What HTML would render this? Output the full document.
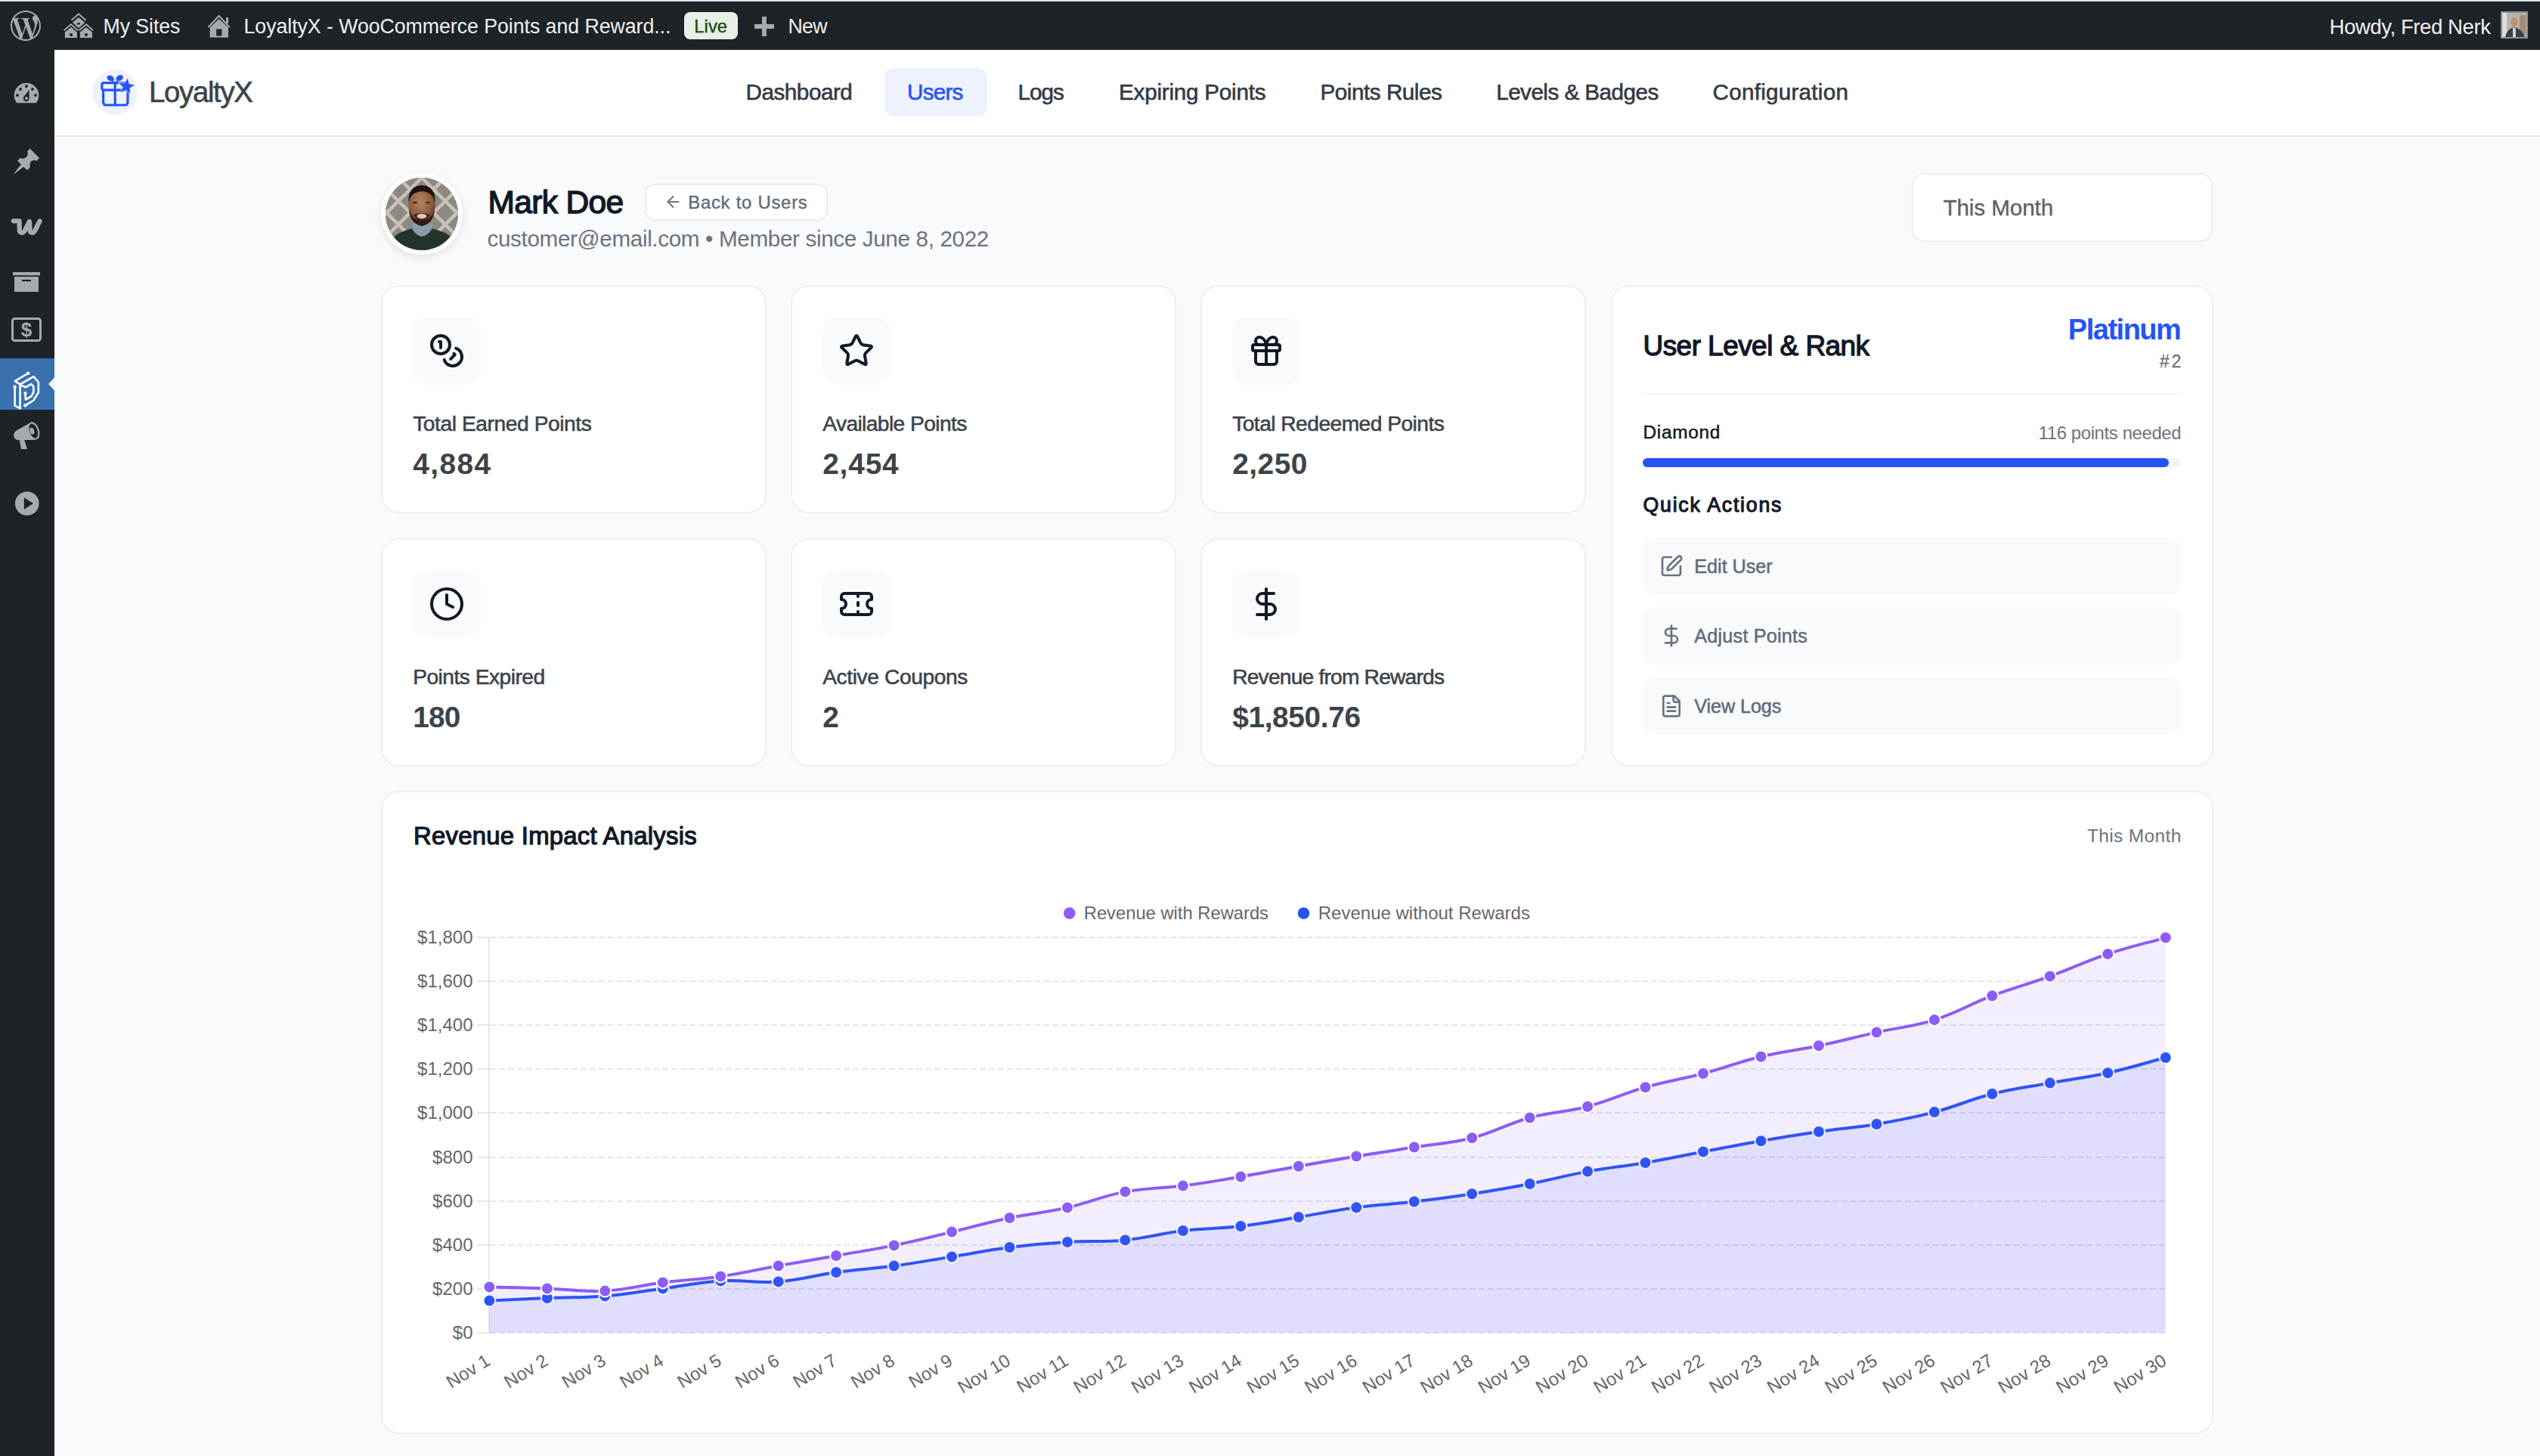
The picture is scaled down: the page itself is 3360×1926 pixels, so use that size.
<!DOCTYPE html>
<html><head><meta charset="utf-8"><title>LoyaltyX - User</title>
<style>
html,body{margin:0;padding:0;}
body{width:3360px;height:1926px;overflow:hidden;background:#f9fafb;font-family:"Liberation Sans",sans-serif;}
#root{position:relative;width:3360px;height:1926px;overflow:hidden;}
.t{position:absolute;white-space:nowrap;line-height:1;}
.a{position:absolute;}
svg{position:absolute;overflow:visible;}
@media (max-width: 2400px) {
  body{width:1680px;height:963px;}
  #root{zoom:0.5;}
}

</style></head><body>
<div id="root">
<div class="a" style="left:0;top:0;width:3360px;height:2px;background:#e4e4e4"></div>
<div class="a" style="left:0;top:2px;width:3360px;height:64px;background:#1d2327"></div>
<div class="a" style="left:0;top:66px;width:72px;height:1860px;background:#1d2327"></div>
<div class="a" style="left:72px;top:66px;width:3288px;height:113px;background:#fff;border-bottom:2px solid #e5e7eb"></div>
<div class="t" style="font-size:26.74px;top:22.35px;color:#f0f0f1;letter-spacing:-0.078px;left:136.50px;">My Sites</div>
<div class="t" style="font-size:26.74px;top:22.35px;color:#f0f0f1;letter-spacing:-0.053px;left:322.50px;">LoyaltyX - WooCommerce Points and Reward...</div>
<div class="a" style="left:905px;top:16px;width:71px;height:36px;background:#e7f0e7;border-radius:8px"></div>
<div class="t" style="font-size:23.84px;top:22.61px;color:#1a4a12;letter-spacing:0.018px;-webkit-text-stroke:0.4px #1a4a12;left:918.30px;">Live</div>
<div class="t" style="font-size:26.74px;top:22.35px;color:#f0f0f1;letter-spacing:-0.773px;left:1042.50px;">New</div>
<div class="t" style="font-size:27.47px;top:21.73px;color:#f0f0f1;letter-spacing:-0.39px;left:3081.50px;">Howdy, Fred Nerk</div>
<div class="a" style="left:122px;top:92px;width:60px;height:60px;border-radius:50%;background:#eef2fe"></div>
<div class="t" style="font-size:38.37px;top:102.90px;color:#3c434a;letter-spacing:-1.336px;-webkit-text-stroke:0.6px #3c434a;left:197.10px;">LoyaltyX</div>
<div class="a" style="left:1170px;top:90px;width:136px;height:64px;border-radius:12px;background:#eef2fd"></div>
<div class="t" style="font-size:29.65px;top:106.89px;color:#333a45;letter-spacing:-0.458px;-webkit-text-stroke:0.6px #333a45;left:986.50px;">Dashboard</div>
<div class="t" style="font-size:29.65px;top:106.89px;color:#2554f5;letter-spacing:-0.765px;-webkit-text-stroke:0.6px #2554f5;left:1200.00px;">Users</div>
<div class="t" style="font-size:29.65px;top:106.89px;color:#333a45;letter-spacing:-0.955px;-webkit-text-stroke:0.6px #333a45;left:1346.50px;">Logs</div>
<div class="t" style="font-size:29.65px;top:106.89px;color:#333a45;letter-spacing:-0.226px;-webkit-text-stroke:0.6px #333a45;left:1480.00px;">Expiring Points</div>
<div class="t" style="font-size:29.65px;top:106.89px;color:#333a45;letter-spacing:-0.462px;-webkit-text-stroke:0.6px #333a45;left:1746.50px;">Points Rules</div>
<div class="t" style="font-size:29.65px;top:106.89px;color:#333a45;letter-spacing:-0.53px;-webkit-text-stroke:0.6px #333a45;left:1979.20px;">Levels &amp; Badges</div>
<div class="t" style="font-size:29.65px;top:106.89px;color:#333a45;letter-spacing:0.255px;-webkit-text-stroke:0.6px #333a45;left:2265.50px;">Configuration</div>
<div class="a" style="left:504px;top:229px;width:108px;height:108px;border-radius:50%;background:#fff;box-shadow:0 4px 12px rgba(0,0,0,0.10)"></div>
<div class="a" style="left:510px;top:235px;width:96px;height:96px;border-radius:50%;background:#8f8a84"></div>
<div class="t" style="font-size:42.5px;top:247.00px;color:#111827;letter-spacing:-0.663px;-webkit-text-stroke:1.4px #111827;left:645.50px;">Mark Doe</div>
<div class="a" style="left:852.5px;top:242.5px;width:238.5px;height:45.5px;border:2px solid #ececec;border-radius:13px;background:#fff"></div>
<div class="t" style="font-size:23.84px;top:255.56px;color:#5f6b7a;letter-spacing:0.766px;-webkit-text-stroke:0.4px #5f6b7a;left:910.25px;">Back to Users</div>
<div class="t" style="font-size:29.65px;top:300.64px;color:#6b7280;letter-spacing:-0.353px;left:644.50px;">customer@email.com • Member since June 8, 2022</div>
<div class="a" style="left:2529px;top:229px;width:394px;height:87px;border:2px solid #eeeeee;border-radius:16px;background:#fff"></div>
<div class="t" style="font-size:29.65px;top:260.09px;color:#5c6068;letter-spacing:-0.11px;-webkit-text-stroke:0.3px #5c6068;left:2570.50px;">This Month</div>
<div class="a" style="left:504px;top:377px;width:506px;height:298px;border:2px solid #efefef;border-radius:24px;background:#fff"></div>
<div class="a" style="left:546px;top:419px;width:90px;height:90px;border-radius:20px;background:#f9fafb"></div>
<div class="t" style="font-size:28.2px;top:545.81px;color:#3c434a;letter-spacing:-0.434px;-webkit-text-stroke:0.55px #3c434a;left:546.20px;">Total Earned Points</div>
<div class="t" style="font-size:38.81px;top:595.13px;color:#3c434a;font-weight:700;letter-spacing:1.469px;left:546.20px;">4,884</div>
<div class="a" style="left:1046px;top:377px;width:506px;height:298px;border:2px solid #efefef;border-radius:24px;background:#fff"></div>
<div class="a" style="left:1088px;top:419px;width:90px;height:90px;border-radius:20px;background:#f9fafb"></div>
<div class="t" style="font-size:28.2px;top:545.81px;color:#3c434a;letter-spacing:-0.597px;-webkit-text-stroke:0.55px #3c434a;left:1088.20px;">Available Points</div>
<div class="t" style="font-size:38.81px;top:595.13px;color:#3c434a;font-weight:700;letter-spacing:0.844px;left:1088.20px;">2,454</div>
<div class="a" style="left:1588px;top:377px;width:506px;height:298px;border:2px solid #efefef;border-radius:24px;background:#fff"></div>
<div class="a" style="left:1630px;top:419px;width:90px;height:90px;border-radius:20px;background:#f9fafb"></div>
<div class="t" style="font-size:28.2px;top:545.81px;color:#3c434a;letter-spacing:-0.542px;-webkit-text-stroke:0.55px #3c434a;left:1630.20px;">Total Redeemed Points</div>
<div class="t" style="font-size:38.81px;top:595.13px;color:#3c434a;font-weight:700;letter-spacing:0.519px;left:1630.20px;">2,250</div>
<div class="a" style="left:504px;top:712px;width:506px;height:298px;border:2px solid #efefef;border-radius:24px;background:#fff"></div>
<div class="a" style="left:546px;top:754px;width:90px;height:90px;border-radius:20px;background:#f9fafb"></div>
<div class="t" style="font-size:28.2px;top:880.81px;color:#3c434a;letter-spacing:-0.528px;-webkit-text-stroke:0.55px #3c434a;left:546.20px;">Points Expired</div>
<div class="t" style="font-size:38.81px;top:930.13px;color:#3c434a;font-weight:700;letter-spacing:-0.858px;left:546.20px;">180</div>
<div class="a" style="left:1046px;top:712px;width:506px;height:298px;border:2px solid #efefef;border-radius:24px;background:#fff"></div>
<div class="a" style="left:1088px;top:754px;width:90px;height:90px;border-radius:20px;background:#f9fafb"></div>
<div class="t" style="font-size:28.2px;top:880.81px;color:#3c434a;letter-spacing:-0.407px;-webkit-text-stroke:0.55px #3c434a;left:1088.20px;">Active Coupons</div>
<div class="t" style="font-size:38.81px;top:930.13px;color:#3c434a;font-weight:700;left:1088.20px;">2</div>
<div class="a" style="left:1588px;top:712px;width:506px;height:298px;border:2px solid #efefef;border-radius:24px;background:#fff"></div>
<div class="a" style="left:1630px;top:754px;width:90px;height:90px;border-radius:20px;background:#f9fafb"></div>
<div class="t" style="font-size:28.2px;top:880.81px;color:#3c434a;letter-spacing:-0.805px;-webkit-text-stroke:0.55px #3c434a;left:1630.20px;">Revenue from Rewards</div>
<div class="t" style="font-size:38.81px;top:930.13px;color:#3c434a;font-weight:700;letter-spacing:-0.338px;left:1630.20px;">$1,850.76</div>
<div class="a" style="left:2131px;top:377px;width:793px;height:633px;border:2px solid #efefef;border-radius:24px;background:#fff"></div>
<div class="t" style="font-size:37px;top:439.36px;color:#111827;letter-spacing:-0.555px;-webkit-text-stroke:1.3px #111827;left:2173.50px;">User Level &amp; Rank</div>
<div class="t" style="font-size:37.94px;top:418.06px;color:#2554f5;font-weight:700;letter-spacing:-1.457px;right:475.66px;">Platinum</div>
<div class="t" style="font-size:23.26px;top:467.30px;color:#6b7280;letter-spacing:2.823px;-webkit-text-stroke:0.3px #6b7280;right:471.68px;">#2</div>
<div class="a" style="left:2173px;top:520px;width:713px;height:2px;background:#f3f4f6"></div>
<div class="t" style="font-size:24.42px;top:560.32px;color:#111827;letter-spacing:0.71px;-webkit-text-stroke:0.5px #111827;left:2173.50px;">Diamond</div>
<div class="t" style="font-size:23.84px;top:560.81px;color:#6b7280;letter-spacing:-0.338px;right:474.84px;">116 points needed</div>
<div class="a" style="left:2173px;top:606px;width:713px;height:12px;border-radius:6px;background:#f3f4f6"></div>
<div class="a" style="left:2173px;top:606px;width:696px;height:12px;border-radius:6px;background:#2554f5"></div>
<div class="t" style="font-size:26.74px;top:654.95px;color:#111827;letter-spacing:1.744px;-webkit-text-stroke:1.1px #111827;left:2173.50px;">Quick Actions</div>
<div class="a" style="left:2173px;top:711px;width:713px;height:76px;border-radius:16px;background:#f9fafb"></div>
<div class="t" style="font-size:25.29px;top:736.88px;color:#5f6b7a;letter-spacing:-0.063px;-webkit-text-stroke:0.5px #5f6b7a;left:2241.30px;">Edit User</div>
<div class="a" style="left:2173px;top:803px;width:713px;height:76px;border-radius:16px;background:#f9fafb"></div>
<div class="t" style="font-size:25.29px;top:828.88px;color:#5f6b7a;letter-spacing:0.172px;-webkit-text-stroke:0.5px #5f6b7a;left:2241.30px;">Adjust Points</div>
<div class="a" style="left:2173px;top:896px;width:713px;height:76px;border-radius:16px;background:#f9fafb"></div>
<div class="t" style="font-size:25.29px;top:921.88px;color:#5f6b7a;letter-spacing:-0.138px;-webkit-text-stroke:0.5px #5f6b7a;left:2241.30px;">View Logs</div>
<div class="a" style="left:504px;top:1046px;width:2420px;height:847px;border:2px solid #efefef;border-radius:24px;background:#fff"></div>
<div class="t" style="font-size:32.92px;top:1090.37px;color:#111827;letter-spacing:0.236px;-webkit-text-stroke:1.2px #111827;left:547.00px;">Revenue Impact Analysis</div>
<div class="t" style="font-size:24.42px;top:1094.12px;color:#6b7280;letter-spacing:0.398px;right:474.40px;">This Month</div>
<svg width="3360" height="1926" viewBox="0 0 3360 1926" style="left:0;top:0"><g transform="translate(14 14) scale(1.66667)"><path fill="#a7aaad" d="M21.469 6.825c.84 1.537 1.318 3.3 1.318 5.175 0 3.979-2.156 7.456-5.363 9.325l3.295-9.527c.615-1.54.82-2.771.82-3.864 0-.405-.026-.78-.07-1.11m-7.981.105c.647-.03 1.232-.105 1.232-.105.582-.075.514-.93-.067-.899 0 0-1.755.135-2.88.135-1.064 0-2.85-.15-2.85-.15-.585-.03-.661.855-.075.885 0 0 .54.061 1.125.09l1.68 4.605-2.37 7.08L5.354 6.9c.649-.03 1.234-.1 1.234-.1.585-.075.516-.93-.065-.896 0 0-1.746.138-2.874.138-.2 0-.438-.008-.69-.015C4.911 3.15 8.235 1.215 12 1.215c2.809 0 5.365 1.072 7.286 2.833-.046-.003-.091-.009-.141-.009-1.06 0-1.812.923-1.812 1.914 0 .89.513 1.643 1.06 2.531.411.72.89 1.643.89 2.977 0 .915-.354 1.994-.821 3.479l-1.075 3.585-3.9-11.61.001.014zM12 22.784c-1.059 0-2.081-.153-3.048-.437l3.237-9.406 3.315 9.087c.024.053.05.101.078.149-1.12.393-2.325.609-3.582.609M1.211 12c0-1.564.336-3.05.935-4.39L7.29 21.709C3.694 19.96 1.212 16.271 1.211 12M12 0C5.385 0 0 5.385 0 12s5.385 12 12 12 12-5.385 12-12S18.615 0 12 0"/></g><polyline points="94.5,26.5 104,18.6 113.6,26.8" fill="none" stroke="#a7aaad" stroke-width="1.9"/><polygon points="95.8,29.8 104,22.9 112.3,29.8 104,37.2" fill="#a7aaad"/><rect x="102.2" y="30.1" width="3.5" height="2.6" fill="#1d2327"/><polyline points="84.6,40.3 94,32.3 103.2,40.3" fill="none" stroke="#a7aaad" stroke-width="1.9"/><polygon points="85.9,42.6 94,36 102,42.6 102,50 85.9,50" fill="#a7aaad"/><rect x="92.2" y="44.1" width="3.6" height="3.7" fill="#1d2327"/><polyline points="104.55,40.3 113.95,32.3 123.15,40.3" fill="none" stroke="#a7aaad" stroke-width="1.9"/><polygon points="105.85000000000001,42.6 113.95,36 121.95,42.6 121.95,50 105.85000000000001,50" fill="#a7aaad"/><rect x="112.15" y="44.1" width="3.6" height="3.7" fill="#1d2327"/><polyline points="275.5,36 289.6,21 303.6,36" fill="none" stroke="#a7aaad" stroke-width="2.2"/><rect x="299" y="23" width="3" height="8" fill="#a7aaad"/><polygon points="277.6,36.5 289.6,25 302,36.5 302,49.6 277.6,49.6" fill="#a7aaad"/><rect x="286.2" y="38.5" width="7.2" height="9" fill="#1d2327"/><rect x="998" y="32" width="26" height="6" fill="#a7aaad"/><rect x="1008" y="22" width="6" height="26" fill="#a7aaad"/><rect x="3308" y="15" width="36" height="36" fill="#8a8f96"/><rect x="3310" y="17" width="32" height="32" fill="#b9b4ab"/><rect x="3310" y="17" width="6" height="32" fill="#d9dde0"/><rect x="3333" y="20" width="8" height="26" fill="#a48a6e"/><path d="M3314 49 Q3316 38 3326 36 Q3336 38 3340 49 Z" fill="#3a3f4a"/><rect x="3324" y="37" width="4" height="12" fill="#d8d2c0"/><ellipse cx="3326" cy="29" rx="4.5" ry="6" fill="#b98f74"/><path d="M22.3 136.3 A16.3 16.3 0 1 1 47.7 136.3 Z" fill="#a7aaad"/><circle cx="34.9" cy="114" r="1.9" fill="#1d2327"/><circle cx="27" cy="118" r="1.9" fill="#1d2327"/><circle cx="43" cy="118" r="1.9" fill="#1d2327"/><circle cx="23" cy="125.9" r="1.9" fill="#1d2327"/><circle cx="47" cy="125.9" r="1.9" fill="#1d2327"/><path d="M38.6 118.7 L38.6 130.5 A3.9 3.9 0 1 1 31.4 128.2 Z" fill="#1d2327"/><circle cx="34.9" cy="130.1" r="2" fill="#a7aaad"/><path d="M39.5 196.4 L52.1 209.1 L48.5 212.7 Q41.5 210.5 39.6 216.5 Q38.8 219.5 39.9 221.6 L36.1 225 L31 220.7 Q23.5 226.5 18.1 230.9 Q21.5 224.5 27.9 217.5 L23.2 212.5 L26.8 209.1 Q30.5 211 34.5 208 Q38.3 204.5 36.1 200.3 Z" fill="#a7aaad"/><path transform="translate(1.8 0)" d="M16 292.3 L23.8 292.3 L24 305 Q24.3 307.8 27.3 307.8 Q29.5 307.8 31 305 L37.2 293 L37.7 305 Q38 307.8 41 307.8 Q43 307.8 44.5 305 L50.8 292.5" fill="none" stroke="#a7aaad" stroke-width="6.2" stroke-linecap="round" stroke-linejoin="round"/><rect x="17" y="360" width="36" height="4.2" fill="#a7aaad"/><rect x="19" y="366" width="32" height="20" fill="#a7aaad"/><rect x="29" y="370" width="12" height="2.2" fill="#1d2327"/><rect x="16.5" y="421.5" width="37" height="29" rx="3" fill="none" stroke="#a7aaad" stroke-width="3"/><text x="35" y="445" text-anchor="middle" font-family="Liberation Sans" font-weight="700" font-size="26" fill="#a7aaad">$</text><rect x="0" y="474" width="72" height="68" fill="#3871ae"/><polygon points="72,499.5 64,508 72,516.5" fill="#f0f0f1"/><g fill="none" stroke="#ffffff" stroke-width="2.6" stroke-linecap="round" stroke-linejoin="round"><polyline points="37.3,493.7 19.8,504.2 26.6,508.4 44.4,498.2 50.9,505.5 50.9,519 44.4,529.5 33.4,536.3"/><polyline points="19.6,511.8 19.6,536.3 26.6,540.5 26.6,508.4"/><polyline points="29.2,510.2 33.9,512.3 41.2,508.1 44.4,511.2 44.4,519 41.2,524.3 33.9,528.5 33.4,520.1"/></g><circle cx="37.3" cy="493.7" r="2.2" fill="#ffffff"/><circle cx="19.6" cy="511.8" r="2.2" fill="#ffffff"/><circle cx="33.4" cy="520.1" r="2.2" fill="#ffffff"/><circle cx="33.4" cy="536.3" r="2.2" fill="#ffffff"/><path d="M41.9 558.2 L22.5 569 Q17.6 571.8 18.2 577 Q19.2 582 24.5 582 L46 582 Z" fill="#a7aaad"/><ellipse cx="44.7" cy="569.9" rx="7.2" ry="12" transform="rotate(-18 44.7 569.9)" fill="#a7aaad"/><ellipse cx="44.3" cy="570" rx="5.3" ry="9.9" transform="rotate(-18 44.3 570)" fill="#1d2327"/><ellipse cx="42.3" cy="570.3" rx="2.9" ry="4.6" transform="rotate(-15 42.3 570.3)" fill="#a7aaad"/><polygon points="25.8,581.5 32,581.5 36.1,594 27.9,594" fill="#a7aaad"/><circle cx="35.8" cy="666" r="15.8" fill="#a7aaad"/><polygon points="31.8,658 31.8,674 44,666" fill="#1d2327"/><g fill="none" stroke="#2554f5" stroke-width="3.2" stroke-linejoin="round"><rect x="134.8" y="109.6" width="35" height="9.5" rx="2.5"/><path d="M136.6 119.5 V135 Q136.6 139 140.6 139 H165 Q169 139 169 135 V119.5"/><line x1="152.2" y1="109" x2="152.2" y2="139"/></g><ellipse cx="146.2" cy="103.6" rx="5" ry="3.6" fill="#2554f5" transform="rotate(28 146.2 103.6)"/><ellipse cx="158.2" cy="103.2" rx="5" ry="3.6" fill="#2554f5" transform="rotate(-28 158.2 103.2)"/><polygon points="148,105 152.2,108.5 156.5,105 155,110 149.5,110" fill="#2554f5"/><polygon points="168.97,102.52 170.84,110.73 179.12,112.32 171.88,116.64 172.93,125.00 166.59,119.45 158.96,123.03 162.28,115.29 156.51,109.14 164.91,109.90" fill="#2554f5" stroke="#eef2fe" stroke-width="0.8"/><defs><clipPath id="av"><circle cx="558" cy="283" r="48"/></clipPath><radialGradient id="face" cx="0.45" cy="0.4" r="0.6"><stop offset="0" stop-color="#b88462"/><stop offset="0.7" stop-color="#8c5d40"/><stop offset="1" stop-color="#5e3b28"/></radialGradient></defs><g clip-path="url(#av)"><rect x="510" y="235" width="96" height="96" fill="#8d8882"/><line x1="372" y1="235" x2="468" y2="331" stroke="#c6c1b9" stroke-width="4.5"/><line x1="744" y1="235" x2="648" y2="331" stroke="#c6c1b9" stroke-width="4.5"/><line x1="403" y1="235" x2="499" y2="331" stroke="#c6c1b9" stroke-width="4.5"/><line x1="713" y1="235" x2="617" y2="331" stroke="#c6c1b9" stroke-width="4.5"/><line x1="434" y1="235" x2="530" y2="331" stroke="#c6c1b9" stroke-width="4.5"/><line x1="682" y1="235" x2="586" y2="331" stroke="#c6c1b9" stroke-width="4.5"/><line x1="465" y1="235" x2="561" y2="331" stroke="#c6c1b9" stroke-width="4.5"/><line x1="651" y1="235" x2="555" y2="331" stroke="#c6c1b9" stroke-width="4.5"/><line x1="496" y1="235" x2="592" y2="331" stroke="#c6c1b9" stroke-width="4.5"/><line x1="620" y1="235" x2="524" y2="331" stroke="#c6c1b9" stroke-width="4.5"/><line x1="527" y1="235" x2="623" y2="331" stroke="#c6c1b9" stroke-width="4.5"/><line x1="589" y1="235" x2="493" y2="331" stroke="#c6c1b9" stroke-width="4.5"/><line x1="558" y1="235" x2="654" y2="331" stroke="#c6c1b9" stroke-width="4.5"/><line x1="558" y1="235" x2="462" y2="331" stroke="#c6c1b9" stroke-width="4.5"/><line x1="589" y1="235" x2="685" y2="331" stroke="#c6c1b9" stroke-width="4.5"/><line x1="527" y1="235" x2="431" y2="331" stroke="#c6c1b9" stroke-width="4.5"/><line x1="620" y1="235" x2="716" y2="331" stroke="#c6c1b9" stroke-width="4.5"/><line x1="496" y1="235" x2="400" y2="331" stroke="#c6c1b9" stroke-width="4.5"/><line x1="651" y1="235" x2="747" y2="331" stroke="#c6c1b9" stroke-width="4.5"/><line x1="465" y1="235" x2="369" y2="331" stroke="#c6c1b9" stroke-width="4.5"/><path d="M512 331 L518 316 Q528 306 546 302 L570 302 Q590 306 600 316 L606 331 Z" fill="#22352b"/><path d="M544 298 Q547 311 558 313 Q569 311 573 298 L568 295 L549 295 Z" fill="#8d9aae"/><ellipse cx="558" cy="272" rx="17.5" ry="25" fill="url(#face)"/><path d="M540.5 268 Q539 246 558 245 Q577 246 575.5 268 Q573 254 558 253 Q543 254 540.5 268 Z" fill="#1e1410"/><path d="M541 276 Q542 296 558 299 Q574 296 575 276 Q572 291 558 292 Q544 291 541 276 Z" fill="#2a1c15"/><path d="M547 284 Q558 280 569 284 Q566 291 558 292 Q550 291 547 284 Z" fill="#3a2418"/><ellipse cx="558" cy="286" rx="6.5" ry="3.2" fill="#e2c6bb"/><rect x="546" y="267" width="6" height="2" rx="1" fill="#3a2518"/><rect x="563" y="267" width="6" height="2" rx="1" fill="#3a2518"/></g><g transform="translate(567 440) scale(2.0)" fill="none" stroke="#111827" stroke-width="2" stroke-linecap="round" stroke-linejoin="round"><circle cx="8" cy="8" r="6"/><path d="M18.09 10.37A6 6 0 1 1 10.34 18"/><path d="M7 6h1v4"/><path d="m16.71 13.88.7.71-2.82 2.82"/></g><g transform="translate(1109 440) scale(2.0)" fill="none" stroke="#111827" stroke-width="2" stroke-linecap="round" stroke-linejoin="round"><path d="M11.525 2.295a.53.53 0 0 1 .95 0l2.31 4.679a2.123 2.123 0 0 0 1.595 1.16l5.166.756a.53.53 0 0 1 .294.904l-3.736 3.638a2.123 2.123 0 0 0-.611 1.878l.882 5.14a.53.53 0 0 1-.771.56l-4.618-2.428a2.122 2.122 0 0 0-1.973 0L6.396 21.01a.53.53 0 0 1-.77-.56l.881-5.139a2.122 2.122 0 0 0-.611-1.879L2.16 9.795a.53.53 0 0 1 .294-.906l5.165-.755a2.122 2.122 0 0 0 1.597-1.16z"/></g><g transform="translate(1651 440) scale(2.0)" fill="none" stroke="#111827" stroke-width="2" stroke-linecap="round" stroke-linejoin="round"><rect x="3" y="8" width="18" height="4" rx="1"/><path d="M12 8v13"/><path d="M19 12v7a2 2 0 0 1-2 2H7a2 2 0 0 1-2-2v-7"/><path d="M7.5 8a2.5 2.5 0 0 1 0-5A4.8 8 0 0 1 12 8a4.8 8 0 0 1 4.5-5 2.5 2.5 0 0 1 0 5"/></g><g transform="translate(567 775) scale(2.0)" fill="none" stroke="#111827" stroke-width="2" stroke-linecap="round" stroke-linejoin="round"><circle cx="12" cy="12" r="10"/><polyline points="12 6 12 12 16 14"/></g><g transform="translate(1109 775) scale(2.0)" fill="none" stroke="#111827" stroke-width="2" stroke-linecap="round" stroke-linejoin="round"><path d="M2 9a3 3 0 0 1 0 6v2a2 2 0 0 0 2 2h16a2 2 0 0 0 2-2v-2a3 3 0 0 1 0-6V7a2 2 0 0 0-2-2H4a2 2 0 0 0-2 2Z"/><path d="M13 5v2"/><path d="M13 17v2"/><path d="M13 11v2"/></g><g transform="translate(1651 775) scale(2.0)" fill="none" stroke="#111827" stroke-width="2" stroke-linecap="round" stroke-linejoin="round"><line x1="12" x2="12" y1="2" y2="22"/><path d="M17 5H9.5a3.5 3.5 0 0 0 0 7h5a3.5 3.5 0 0 1 0 7H6"/></g><g transform="translate(2195 733) scale(1.3333333333333333)" fill="none" stroke="#6b7280" stroke-width="2" stroke-linecap="round" stroke-linejoin="round"><path d="M12 3H5a2 2 0 0 0-2 2v14a2 2 0 0 0 2 2h14a2 2 0 0 0 2-2v-7"/><path d="M18.375 2.625a1 1 0 0 1 3 3l-9.013 9.014a2 2 0 0 1-.853.505l-2.873.84a.5.5 0 0 1-.62-.62l.84-2.873a2 2 0 0 1 .506-.852z"/></g><g transform="translate(2195 825) scale(1.3333333333333333)" fill="none" stroke="#6b7280" stroke-width="2" stroke-linecap="round" stroke-linejoin="round"><line x1="12" x2="12" y1="2" y2="22"/><path d="M17 5H9.5a3.5 3.5 0 0 0 0 7h5a3.5 3.5 0 0 1 0 7H6"/></g><g transform="translate(2195 918) scale(1.3333333333333333)" fill="none" stroke="#6b7280" stroke-width="2" stroke-linecap="round" stroke-linejoin="round"><path d="M15 2H6a2 2 0 0 0-2 2v16a2 2 0 0 0 2 2h12a2 2 0 0 0 2-2V7Z"/><path d="M14 2v4a2 2 0 0 0 2 2h4"/><path d="M10 9H8"/><path d="M16 13H8"/><path d="M16 17H8"/></g><g transform="translate(878.5 255) scale(1.0)" fill="none" stroke="#6b7280" stroke-width="2" stroke-linecap="round" stroke-linejoin="round"><path d="m12 19-7-7 7-7"/><path d="M19 12H5"/></g><line x1="631" y1="1763.00" x2="647" y2="1763.00" stroke="#e6e6e6" stroke-width="2"/><line x1="648" y1="1763.00" x2="2864.7" y2="1763.00" stroke="#e6e6e6" stroke-width="2" stroke-dasharray="8 4"/><text x="625.5" y="1771.30" text-anchor="end" font-family="Liberation Sans" font-size="24" fill="#666666">$0</text><line x1="631" y1="1705.00" x2="647" y2="1705.00" stroke="#e6e6e6" stroke-width="2"/><line x1="648" y1="1705.00" x2="2864.7" y2="1705.00" stroke="#e6e6e6" stroke-width="2" stroke-dasharray="8 4"/><text x="625.5" y="1713.30" text-anchor="end" font-family="Liberation Sans" font-size="24" fill="#666666">$200</text><line x1="631" y1="1647.00" x2="647" y2="1647.00" stroke="#e6e6e6" stroke-width="2"/><line x1="648" y1="1647.00" x2="2864.7" y2="1647.00" stroke="#e6e6e6" stroke-width="2" stroke-dasharray="8 4"/><text x="625.5" y="1655.30" text-anchor="end" font-family="Liberation Sans" font-size="24" fill="#666666">$400</text><line x1="631" y1="1589.00" x2="647" y2="1589.00" stroke="#e6e6e6" stroke-width="2"/><line x1="648" y1="1589.00" x2="2864.7" y2="1589.00" stroke="#e6e6e6" stroke-width="2" stroke-dasharray="8 4"/><text x="625.5" y="1597.30" text-anchor="end" font-family="Liberation Sans" font-size="24" fill="#666666">$600</text><line x1="631" y1="1531.00" x2="647" y2="1531.00" stroke="#e6e6e6" stroke-width="2"/><line x1="648" y1="1531.00" x2="2864.7" y2="1531.00" stroke="#e6e6e6" stroke-width="2" stroke-dasharray="8 4"/><text x="625.5" y="1539.30" text-anchor="end" font-family="Liberation Sans" font-size="24" fill="#666666">$800</text><line x1="631" y1="1472.00" x2="647" y2="1472.00" stroke="#e6e6e6" stroke-width="2"/><line x1="648" y1="1472.00" x2="2864.7" y2="1472.00" stroke="#e6e6e6" stroke-width="2" stroke-dasharray="8 4"/><text x="625.5" y="1480.30" text-anchor="end" font-family="Liberation Sans" font-size="24" fill="#666666">$1,000</text><line x1="631" y1="1414.00" x2="647" y2="1414.00" stroke="#e6e6e6" stroke-width="2"/><line x1="648" y1="1414.00" x2="2864.7" y2="1414.00" stroke="#e6e6e6" stroke-width="2" stroke-dasharray="8 4"/><text x="625.5" y="1422.30" text-anchor="end" font-family="Liberation Sans" font-size="24" fill="#666666">$1,200</text><line x1="631" y1="1356.00" x2="647" y2="1356.00" stroke="#e6e6e6" stroke-width="2"/><line x1="648" y1="1356.00" x2="2864.7" y2="1356.00" stroke="#e6e6e6" stroke-width="2" stroke-dasharray="8 4"/><text x="625.5" y="1364.30" text-anchor="end" font-family="Liberation Sans" font-size="24" fill="#666666">$1,400</text><line x1="631" y1="1298.00" x2="647" y2="1298.00" stroke="#e6e6e6" stroke-width="2"/><line x1="648" y1="1298.00" x2="2864.7" y2="1298.00" stroke="#e6e6e6" stroke-width="2" stroke-dasharray="8 4"/><text x="625.5" y="1306.30" text-anchor="end" font-family="Liberation Sans" font-size="24" fill="#666666">$1,600</text><line x1="631" y1="1240.00" x2="647" y2="1240.00" stroke="#e6e6e6" stroke-width="2"/><line x1="648" y1="1240.00" x2="2864.7" y2="1240.00" stroke="#e6e6e6" stroke-width="2" stroke-dasharray="8 4"/><text x="625.5" y="1248.30" text-anchor="end" font-family="Liberation Sans" font-size="24" fill="#666666">$1,800</text><line x1="647" y1="1240.0" x2="647" y2="1763.0" stroke="#e6e6e6" stroke-width="2"/><path d="M647.40 1720.60 C677.98 1719.16 693.27 1718.24 723.86 1717.00 C754.43 1715.76 769.85 1716.91 800.32 1714.40 C831.02 1711.87 846.19 1708.40 876.78 1704.40 C907.36 1700.40 922.52 1696.21 953.23 1694.40 C983.69 1692.61 999.31 1697.67 1029.69 1695.40 C1060.47 1693.11 1075.46 1687.17 1106.15 1683.00 C1136.63 1678.85 1152.13 1678.71 1182.61 1674.60 C1213.29 1670.47 1228.49 1667.32 1259.07 1662.40 C1289.66 1657.48 1304.81 1653.90 1335.53 1650.00 C1365.98 1646.14 1381.35 1644.92 1411.99 1643.00 C1442.51 1641.08 1458.05 1643.38 1488.44 1640.40 C1519.22 1637.38 1534.17 1631.70 1564.90 1628.00 C1595.34 1624.34 1610.92 1625.58 1641.36 1622.00 C1672.08 1618.38 1687.26 1614.96 1717.82 1610.00 C1748.43 1605.04 1763.56 1601.32 1794.28 1597.20 C1824.73 1593.12 1840.21 1593.09 1870.74 1589.50 C1901.38 1585.89 1916.70 1583.89 1947.20 1579.20 C1977.87 1574.49 1993.19 1571.90 2023.66 1566.00 C2054.36 1560.06 2069.36 1555.23 2100.11 1549.60 C2130.53 1544.03 2146.09 1543.20 2176.57 1538.00 C2207.25 1532.76 2222.44 1529.26 2253.03 1523.50 C2283.61 1517.74 2298.84 1514.51 2329.49 1509.20 C2360.00 1503.91 2375.30 1501.45 2405.95 1497.00 C2436.47 1492.57 2452.02 1492.15 2482.41 1487.00 C2513.18 1481.79 2528.68 1479.00 2558.87 1471.10 C2589.85 1463.00 2604.28 1454.82 2635.32 1447.00 C2665.45 1439.42 2681.16 1438.17 2711.78 1432.60 C2742.33 1427.05 2757.94 1425.86 2788.24 1419.20 C2819.11 1412.42 2834.12 1407.08 2864.70 1399.00 L2864.70 1763.0 L647.40 1763.0 Z" fill="rgba(37,84,245,0.1)" stroke="none"/><path d="M647.40 1720.60 C677.98 1719.16 693.27 1718.24 723.86 1717.00 C754.43 1715.76 769.85 1716.91 800.32 1714.40 C831.02 1711.87 846.19 1708.40 876.78 1704.40 C907.36 1700.40 922.52 1696.21 953.23 1694.40 C983.69 1692.61 999.31 1697.67 1029.69 1695.40 C1060.47 1693.11 1075.46 1687.17 1106.15 1683.00 C1136.63 1678.85 1152.13 1678.71 1182.61 1674.60 C1213.29 1670.47 1228.49 1667.32 1259.07 1662.40 C1289.66 1657.48 1304.81 1653.90 1335.53 1650.00 C1365.98 1646.14 1381.35 1644.92 1411.99 1643.00 C1442.51 1641.08 1458.05 1643.38 1488.44 1640.40 C1519.22 1637.38 1534.17 1631.70 1564.90 1628.00 C1595.34 1624.34 1610.92 1625.58 1641.36 1622.00 C1672.08 1618.38 1687.26 1614.96 1717.82 1610.00 C1748.43 1605.04 1763.56 1601.32 1794.28 1597.20 C1824.73 1593.12 1840.21 1593.09 1870.74 1589.50 C1901.38 1585.89 1916.70 1583.89 1947.20 1579.20 C1977.87 1574.49 1993.19 1571.90 2023.66 1566.00 C2054.36 1560.06 2069.36 1555.23 2100.11 1549.60 C2130.53 1544.03 2146.09 1543.20 2176.57 1538.00 C2207.25 1532.76 2222.44 1529.26 2253.03 1523.50 C2283.61 1517.74 2298.84 1514.51 2329.49 1509.20 C2360.00 1503.91 2375.30 1501.45 2405.95 1497.00 C2436.47 1492.57 2452.02 1492.15 2482.41 1487.00 C2513.18 1481.79 2528.68 1479.00 2558.87 1471.10 C2589.85 1463.00 2604.28 1454.82 2635.32 1447.00 C2665.45 1439.42 2681.16 1438.17 2711.78 1432.60 C2742.33 1427.05 2757.94 1425.86 2788.24 1419.20 C2819.11 1412.42 2834.12 1407.08 2864.70 1399.00" fill="none" stroke="#2554f5" stroke-width="4" stroke-linejoin="round"/><circle cx="647.40" cy="1720.60" r="8" fill="#2554f5" stroke="#fff" stroke-width="2"/><circle cx="723.86" cy="1717.00" r="8" fill="#2554f5" stroke="#fff" stroke-width="2"/><circle cx="800.32" cy="1714.40" r="8" fill="#2554f5" stroke="#fff" stroke-width="2"/><circle cx="876.78" cy="1704.40" r="8" fill="#2554f5" stroke="#fff" stroke-width="2"/><circle cx="953.23" cy="1694.40" r="8" fill="#2554f5" stroke="#fff" stroke-width="2"/><circle cx="1029.69" cy="1695.40" r="8" fill="#2554f5" stroke="#fff" stroke-width="2"/><circle cx="1106.15" cy="1683.00" r="8" fill="#2554f5" stroke="#fff" stroke-width="2"/><circle cx="1182.61" cy="1674.60" r="8" fill="#2554f5" stroke="#fff" stroke-width="2"/><circle cx="1259.07" cy="1662.40" r="8" fill="#2554f5" stroke="#fff" stroke-width="2"/><circle cx="1335.53" cy="1650.00" r="8" fill="#2554f5" stroke="#fff" stroke-width="2"/><circle cx="1411.99" cy="1643.00" r="8" fill="#2554f5" stroke="#fff" stroke-width="2"/><circle cx="1488.44" cy="1640.40" r="8" fill="#2554f5" stroke="#fff" stroke-width="2"/><circle cx="1564.90" cy="1628.00" r="8" fill="#2554f5" stroke="#fff" stroke-width="2"/><circle cx="1641.36" cy="1622.00" r="8" fill="#2554f5" stroke="#fff" stroke-width="2"/><circle cx="1717.82" cy="1610.00" r="8" fill="#2554f5" stroke="#fff" stroke-width="2"/><circle cx="1794.28" cy="1597.20" r="8" fill="#2554f5" stroke="#fff" stroke-width="2"/><circle cx="1870.74" cy="1589.50" r="8" fill="#2554f5" stroke="#fff" stroke-width="2"/><circle cx="1947.20" cy="1579.20" r="8" fill="#2554f5" stroke="#fff" stroke-width="2"/><circle cx="2023.66" cy="1566.00" r="8" fill="#2554f5" stroke="#fff" stroke-width="2"/><circle cx="2100.11" cy="1549.60" r="8" fill="#2554f5" stroke="#fff" stroke-width="2"/><circle cx="2176.57" cy="1538.00" r="8" fill="#2554f5" stroke="#fff" stroke-width="2"/><circle cx="2253.03" cy="1523.50" r="8" fill="#2554f5" stroke="#fff" stroke-width="2"/><circle cx="2329.49" cy="1509.20" r="8" fill="#2554f5" stroke="#fff" stroke-width="2"/><circle cx="2405.95" cy="1497.00" r="8" fill="#2554f5" stroke="#fff" stroke-width="2"/><circle cx="2482.41" cy="1487.00" r="8" fill="#2554f5" stroke="#fff" stroke-width="2"/><circle cx="2558.87" cy="1471.10" r="8" fill="#2554f5" stroke="#fff" stroke-width="2"/><circle cx="2635.32" cy="1447.00" r="8" fill="#2554f5" stroke="#fff" stroke-width="2"/><circle cx="2711.78" cy="1432.60" r="8" fill="#2554f5" stroke="#fff" stroke-width="2"/><circle cx="2788.24" cy="1419.20" r="8" fill="#2554f5" stroke="#fff" stroke-width="2"/><circle cx="2864.70" cy="1399.00" r="8" fill="#2554f5" stroke="#fff" stroke-width="2"/><path d="M647.40 1702.40 C677.98 1703.20 693.28 1703.36 723.86 1704.40 C754.45 1705.44 769.88 1709.19 800.32 1707.60 C831.05 1705.99 846.11 1700.25 876.78 1696.40 C907.28 1692.57 922.82 1692.78 953.23 1688.40 C983.99 1683.98 999.09 1679.88 1029.69 1674.40 C1060.26 1668.92 1075.58 1666.40 1106.15 1661.00 C1136.74 1655.60 1152.19 1653.65 1182.61 1647.40 C1213.36 1641.09 1228.52 1636.87 1259.07 1629.60 C1289.69 1622.31 1304.74 1617.48 1335.53 1611.00 C1365.91 1604.60 1381.72 1604.25 1411.99 1597.40 C1442.89 1590.41 1457.38 1582.25 1488.44 1576.40 C1518.55 1570.73 1534.43 1572.57 1564.90 1568.60 C1595.60 1564.61 1610.83 1561.67 1641.36 1556.50 C1672.00 1551.31 1687.22 1548.10 1717.82 1542.70 C1748.38 1537.30 1763.65 1534.53 1794.28 1529.50 C1824.82 1524.49 1840.17 1522.44 1870.74 1517.60 C1901.33 1512.76 1917.30 1512.94 1947.20 1505.30 C1978.47 1497.30 1992.47 1486.98 2023.66 1478.50 C2053.63 1470.34 2070.06 1471.62 2100.11 1463.70 C2131.22 1455.50 2145.60 1447.05 2176.57 1438.20 C2206.77 1429.57 2222.65 1428.03 2253.03 1420.00 C2283.81 1411.87 2298.56 1405.22 2329.49 1397.80 C2359.72 1390.54 2375.49 1389.71 2405.95 1383.30 C2436.66 1376.83 2451.77 1372.45 2482.41 1365.60 C2512.94 1358.77 2529.16 1358.50 2558.87 1349.10 C2590.33 1339.14 2604.34 1328.89 2635.32 1317.20 C2665.51 1305.81 2681.44 1302.37 2711.78 1291.40 C2742.60 1280.25 2757.18 1272.28 2788.24 1261.90 C2818.35 1251.84 2834.12 1248.94 2864.70 1240.30 L2864.70 1763.0 L647.40 1763.0 Z" fill="rgba(139,92,246,0.1)" stroke="none"/><path d="M647.40 1702.40 C677.98 1703.20 693.28 1703.36 723.86 1704.40 C754.45 1705.44 769.88 1709.19 800.32 1707.60 C831.05 1705.99 846.11 1700.25 876.78 1696.40 C907.28 1692.57 922.82 1692.78 953.23 1688.40 C983.99 1683.98 999.09 1679.88 1029.69 1674.40 C1060.26 1668.92 1075.58 1666.40 1106.15 1661.00 C1136.74 1655.60 1152.19 1653.65 1182.61 1647.40 C1213.36 1641.09 1228.52 1636.87 1259.07 1629.60 C1289.69 1622.31 1304.74 1617.48 1335.53 1611.00 C1365.91 1604.60 1381.72 1604.25 1411.99 1597.40 C1442.89 1590.41 1457.38 1582.25 1488.44 1576.40 C1518.55 1570.73 1534.43 1572.57 1564.90 1568.60 C1595.60 1564.61 1610.83 1561.67 1641.36 1556.50 C1672.00 1551.31 1687.22 1548.10 1717.82 1542.70 C1748.38 1537.30 1763.65 1534.53 1794.28 1529.50 C1824.82 1524.49 1840.17 1522.44 1870.74 1517.60 C1901.33 1512.76 1917.30 1512.94 1947.20 1505.30 C1978.47 1497.30 1992.47 1486.98 2023.66 1478.50 C2053.63 1470.34 2070.06 1471.62 2100.11 1463.70 C2131.22 1455.50 2145.60 1447.05 2176.57 1438.20 C2206.77 1429.57 2222.65 1428.03 2253.03 1420.00 C2283.81 1411.87 2298.56 1405.22 2329.49 1397.80 C2359.72 1390.54 2375.49 1389.71 2405.95 1383.30 C2436.66 1376.83 2451.77 1372.45 2482.41 1365.60 C2512.94 1358.77 2529.16 1358.50 2558.87 1349.10 C2590.33 1339.14 2604.34 1328.89 2635.32 1317.20 C2665.51 1305.81 2681.44 1302.37 2711.78 1291.40 C2742.60 1280.25 2757.18 1272.28 2788.24 1261.90 C2818.35 1251.84 2834.12 1248.94 2864.70 1240.30" fill="none" stroke="#8b5cf6" stroke-width="4" stroke-linejoin="round"/><circle cx="647.40" cy="1702.40" r="8" fill="#8b5cf6" stroke="#fff" stroke-width="2"/><circle cx="723.86" cy="1704.40" r="8" fill="#8b5cf6" stroke="#fff" stroke-width="2"/><circle cx="800.32" cy="1707.60" r="8" fill="#8b5cf6" stroke="#fff" stroke-width="2"/><circle cx="876.78" cy="1696.40" r="8" fill="#8b5cf6" stroke="#fff" stroke-width="2"/><circle cx="953.23" cy="1688.40" r="8" fill="#8b5cf6" stroke="#fff" stroke-width="2"/><circle cx="1029.69" cy="1674.40" r="8" fill="#8b5cf6" stroke="#fff" stroke-width="2"/><circle cx="1106.15" cy="1661.00" r="8" fill="#8b5cf6" stroke="#fff" stroke-width="2"/><circle cx="1182.61" cy="1647.40" r="8" fill="#8b5cf6" stroke="#fff" stroke-width="2"/><circle cx="1259.07" cy="1629.60" r="8" fill="#8b5cf6" stroke="#fff" stroke-width="2"/><circle cx="1335.53" cy="1611.00" r="8" fill="#8b5cf6" stroke="#fff" stroke-width="2"/><circle cx="1411.99" cy="1597.40" r="8" fill="#8b5cf6" stroke="#fff" stroke-width="2"/><circle cx="1488.44" cy="1576.40" r="8" fill="#8b5cf6" stroke="#fff" stroke-width="2"/><circle cx="1564.90" cy="1568.60" r="8" fill="#8b5cf6" stroke="#fff" stroke-width="2"/><circle cx="1641.36" cy="1556.50" r="8" fill="#8b5cf6" stroke="#fff" stroke-width="2"/><circle cx="1717.82" cy="1542.70" r="8" fill="#8b5cf6" stroke="#fff" stroke-width="2"/><circle cx="1794.28" cy="1529.50" r="8" fill="#8b5cf6" stroke="#fff" stroke-width="2"/><circle cx="1870.74" cy="1517.60" r="8" fill="#8b5cf6" stroke="#fff" stroke-width="2"/><circle cx="1947.20" cy="1505.30" r="8" fill="#8b5cf6" stroke="#fff" stroke-width="2"/><circle cx="2023.66" cy="1478.50" r="8" fill="#8b5cf6" stroke="#fff" stroke-width="2"/><circle cx="2100.11" cy="1463.70" r="8" fill="#8b5cf6" stroke="#fff" stroke-width="2"/><circle cx="2176.57" cy="1438.20" r="8" fill="#8b5cf6" stroke="#fff" stroke-width="2"/><circle cx="2253.03" cy="1420.00" r="8" fill="#8b5cf6" stroke="#fff" stroke-width="2"/><circle cx="2329.49" cy="1397.80" r="8" fill="#8b5cf6" stroke="#fff" stroke-width="2"/><circle cx="2405.95" cy="1383.30" r="8" fill="#8b5cf6" stroke="#fff" stroke-width="2"/><circle cx="2482.41" cy="1365.60" r="8" fill="#8b5cf6" stroke="#fff" stroke-width="2"/><circle cx="2558.87" cy="1349.10" r="8" fill="#8b5cf6" stroke="#fff" stroke-width="2"/><circle cx="2635.32" cy="1317.20" r="8" fill="#8b5cf6" stroke="#fff" stroke-width="2"/><circle cx="2711.78" cy="1291.40" r="8" fill="#8b5cf6" stroke="#fff" stroke-width="2"/><circle cx="2788.24" cy="1261.90" r="8" fill="#8b5cf6" stroke="#fff" stroke-width="2"/><circle cx="2864.70" cy="1240.30" r="8" fill="#8b5cf6" stroke="#fff" stroke-width="2"/><circle cx="1414.75" cy="1208" r="7.75" fill="#8b5cf6"/><text x="1433.75" y="1215.9" font-family="Liberation Sans" font-size="24" fill="#666666" textLength="244.25" lengthAdjust="spacingAndGlyphs">Revenue with Rewards</text><circle cx="1724.5" cy="1208" r="7.75" fill="#2554f5"/><text x="1743.75" y="1215.9" font-family="Liberation Sans" font-size="24" fill="#666666">Revenue without Rewards</text><text transform="translate(638.38 1785.00) rotate(-31.5)" x="0" y="22.70" text-anchor="end" font-family="Liberation Sans" font-size="24" fill="#666666">Nov 1</text><text transform="translate(714.83 1785.00) rotate(-31.5)" x="0" y="22.70" text-anchor="end" font-family="Liberation Sans" font-size="24" fill="#666666">Nov 2</text><text transform="translate(791.29 1785.00) rotate(-31.5)" x="0" y="22.70" text-anchor="end" font-family="Liberation Sans" font-size="24" fill="#666666">Nov 3</text><text transform="translate(867.75 1785.00) rotate(-31.5)" x="0" y="22.70" text-anchor="end" font-family="Liberation Sans" font-size="24" fill="#666666">Nov 4</text><text transform="translate(944.21 1785.00) rotate(-31.5)" x="0" y="22.70" text-anchor="end" font-family="Liberation Sans" font-size="24" fill="#666666">Nov 5</text><text transform="translate(1020.67 1785.00) rotate(-31.5)" x="0" y="22.70" text-anchor="end" font-family="Liberation Sans" font-size="24" fill="#666666">Nov 6</text><text transform="translate(1097.13 1785.00) rotate(-31.5)" x="0" y="22.70" text-anchor="end" font-family="Liberation Sans" font-size="24" fill="#666666">Nov 7</text><text transform="translate(1173.59 1785.00) rotate(-31.5)" x="0" y="22.70" text-anchor="end" font-family="Liberation Sans" font-size="24" fill="#666666">Nov 8</text><text transform="translate(1250.04 1785.00) rotate(-31.5)" x="0" y="22.70" text-anchor="end" font-family="Liberation Sans" font-size="24" fill="#666666">Nov 9</text><text transform="translate(1326.50 1785.00) rotate(-31.5)" x="0" y="22.70" text-anchor="end" font-family="Liberation Sans" font-size="24" fill="#666666">Nov 10</text><text transform="translate(1402.96 1785.00) rotate(-31.5)" x="0" y="22.70" text-anchor="end" font-family="Liberation Sans" font-size="24" fill="#666666">Nov 11</text><text transform="translate(1479.42 1785.00) rotate(-31.5)" x="0" y="22.70" text-anchor="end" font-family="Liberation Sans" font-size="24" fill="#666666">Nov 12</text><text transform="translate(1555.88 1785.00) rotate(-31.5)" x="0" y="22.70" text-anchor="end" font-family="Liberation Sans" font-size="24" fill="#666666">Nov 13</text><text transform="translate(1632.34 1785.00) rotate(-31.5)" x="0" y="22.70" text-anchor="end" font-family="Liberation Sans" font-size="24" fill="#666666">Nov 14</text><text transform="translate(1708.80 1785.00) rotate(-31.5)" x="0" y="22.70" text-anchor="end" font-family="Liberation Sans" font-size="24" fill="#666666">Nov 15</text><text transform="translate(1785.26 1785.00) rotate(-31.5)" x="0" y="22.70" text-anchor="end" font-family="Liberation Sans" font-size="24" fill="#666666">Nov 16</text><text transform="translate(1861.71 1785.00) rotate(-31.5)" x="0" y="22.70" text-anchor="end" font-family="Liberation Sans" font-size="24" fill="#666666">Nov 17</text><text transform="translate(1938.17 1785.00) rotate(-31.5)" x="0" y="22.70" text-anchor="end" font-family="Liberation Sans" font-size="24" fill="#666666">Nov 18</text><text transform="translate(2014.63 1785.00) rotate(-31.5)" x="0" y="22.70" text-anchor="end" font-family="Liberation Sans" font-size="24" fill="#666666">Nov 19</text><text transform="translate(2091.09 1785.00) rotate(-31.5)" x="0" y="22.70" text-anchor="end" font-family="Liberation Sans" font-size="24" fill="#666666">Nov 20</text><text transform="translate(2167.55 1785.00) rotate(-31.5)" x="0" y="22.70" text-anchor="end" font-family="Liberation Sans" font-size="24" fill="#666666">Nov 21</text><text transform="translate(2244.01 1785.00) rotate(-31.5)" x="0" y="22.70" text-anchor="end" font-family="Liberation Sans" font-size="24" fill="#666666">Nov 22</text><text transform="translate(2320.47 1785.00) rotate(-31.5)" x="0" y="22.70" text-anchor="end" font-family="Liberation Sans" font-size="24" fill="#666666">Nov 23</text><text transform="translate(2396.92 1785.00) rotate(-31.5)" x="0" y="22.70" text-anchor="end" font-family="Liberation Sans" font-size="24" fill="#666666">Nov 24</text><text transform="translate(2473.38 1785.00) rotate(-31.5)" x="0" y="22.70" text-anchor="end" font-family="Liberation Sans" font-size="24" fill="#666666">Nov 25</text><text transform="translate(2549.84 1785.00) rotate(-31.5)" x="0" y="22.70" text-anchor="end" font-family="Liberation Sans" font-size="24" fill="#666666">Nov 26</text><text transform="translate(2626.30 1785.00) rotate(-31.5)" x="0" y="22.70" text-anchor="end" font-family="Liberation Sans" font-size="24" fill="#666666">Nov 27</text><text transform="translate(2702.76 1785.00) rotate(-31.5)" x="0" y="22.70" text-anchor="end" font-family="Liberation Sans" font-size="24" fill="#666666">Nov 28</text><text transform="translate(2779.22 1785.00) rotate(-31.5)" x="0" y="22.70" text-anchor="end" font-family="Liberation Sans" font-size="24" fill="#666666">Nov 29</text><text transform="translate(2855.68 1785.00) rotate(-31.5)" x="0" y="22.70" text-anchor="end" font-family="Liberation Sans" font-size="24" fill="#666666">Nov 30</text></svg>
</div>
</body></html>
